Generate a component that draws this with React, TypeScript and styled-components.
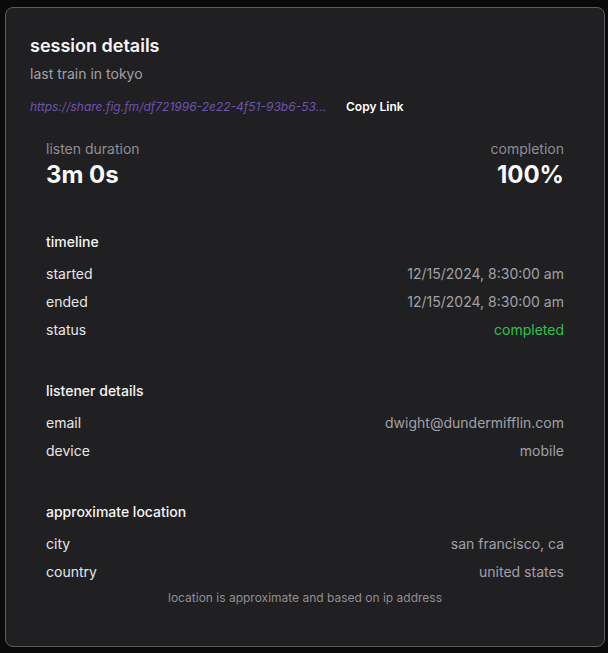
import React from "react";
import styled, { createGlobalStyle } from "styled-components";

const Global = createGlobalStyle`
  html, body { margin: 0; padding: 0; background: #0a0a0a; }
  body { font-family: Inter, "Noto Sans", sans-serif; -webkit-font-smoothing: antialiased; }
`;

const Backdrop = styled.div`
  min-height: 653px;
  display: flex;
  align-items: center;
  padding-left: 5px;
  box-sizing: border-box;
`;

const Modal = styled.div`
  width: 600px;
  box-sizing: border-box;
  background: #202022;
  border: 1px solid #5c5c5f;
  border-radius: 8px;
  padding: 24px;
  color: #f4f4f5;
`;

const Title = styled.h2`
  margin: 0;
  font-size: 18px;
  line-height: 28px;
  font-weight: 600;
  color: #f5f5f5;
`;

const Subtitle = styled.p`
  margin: 4px 0 0;
  font-size: 14px;
  line-height: 20px;
  color: #a1a1a6;
`;

const LinkRow = styled.div`
  margin-top: 8px;
  height: 31px;
  display: flex;
  align-items: center;
  gap: 19px;
`;

const ShareLink = styled.a`
  width: 297px;
  font-size: 12px;
  line-height: 16px;
  font-style: italic;
  color: #6e52b0;
  white-space: nowrap;
  overflow: hidden;
  text-overflow: ellipsis;
  text-decoration: none;
`;

const CopyButton = styled.button`
  background: none;
  border: none;
  padding: 0;
  font-family: inherit;
  font-size: 12px;
  line-height: 16px;
  font-weight: 600;
  color: #ffffff;
  cursor: pointer;
`;

const Sections = styled.div`
  display: flex;
  flex-direction: column;
  gap: 9px;
`;

const Section = styled.section`
  padding: 16px;
`;

const Stats = styled(Section)`
  display: flex;
  justify-content: space-between;
`;

const Stat = styled.div<{ $align?: "left" | "right" }>`
  display: flex;
  flex-direction: column;
  text-align: ${(p) => p.$align ?? "left"};
`;

const StatLabel = styled.span`
  font-size: 14px;
  line-height: 20px;
  color: #8e8e93;
`;

const StatValue = styled.span`
  font-size: 24px;
  line-height: 32px;
  font-weight: 700;
  color: #fafafa;
`;

const SectionTitle = styled.h3`
  margin: 0 0 12px;
  font-size: 14px;
  line-height: 20px;
  font-weight: 500;
  color: #f4f4f5;
`;

const Rows = styled.div`
  display: flex;
  flex-direction: column;
  gap: 8px;
`;

const Row = styled.div`
  display: flex;
  justify-content: space-between;
  font-size: 14px;
  line-height: 20px;
`;

const Label = styled.span`
  color: #e6e6e8;
`;

const Value = styled.span<{ $tone?: "ok" }>`
  color: ${(p) => (p.$tone === "ok" ? "#2ec24f" : "#a1a1a6")};
`;

const Note = styled.p`
  margin: 8px 0 0;
  text-align: center;
  font-size: 12px;
  line-height: 16px;
  color: #8e8e93;
`;

type Item = { label: string; value: string; tone?: "ok" };

const DetailSection = ({ title, items, children }: { title: string; items: Item[]; children?: React.ReactNode }) => (
  <Section>
    <SectionTitle>{title}</SectionTitle>
    <Rows>
      {items.map((it) => (
        <Row key={it.label}>
          <Label>{it.label}</Label>
          <Value $tone={it.tone}>{it.value}</Value>
        </Row>
      ))}
    </Rows>
    {children}
  </Section>
);

export default function App() {
  return (
    <>
      <Global />
      <Backdrop>
        <Modal>
          <Title>session details</Title>
          <Subtitle>last train in tokyo</Subtitle>
          <LinkRow>
            <ShareLink href="#">https://share.fig.fm/df721996-2e22-4f51-93b6-53a7c1e0d9f2</ShareLink>
            <CopyButton>Copy Link</CopyButton>
          </LinkRow>
          <Sections>
            <Stats>
              <Stat>
                <StatLabel>listen duration</StatLabel>
                <StatValue>3m 0s</StatValue>
              </Stat>
              <Stat $align="right">
                <StatLabel>completion</StatLabel>
                <StatValue>100%</StatValue>
              </Stat>
            </Stats>
            <DetailSection
              title="timeline"
              items={[
                { label: "started", value: "12/15/2024, 8:30:00 am" },
                { label: "ended", value: "12/15/2024, 8:30:00 am" },
                { label: "status", value: "completed", tone: "ok" },
              ]}
            />
            <DetailSection
              title="listener details"
              items={[
                { label: "email", value: "dwight@dundermifflin.com" },
                { label: "device", value: "mobile" },
              ]}
            />
            <DetailSection
              title="approximate location"
              items={[
                { label: "city", value: "san francisco, ca" },
                { label: "country", value: "united states" },
              ]}
            >
              <Note>location is approximate and based on ip address</Note>
            </DetailSection>
          </Sections>
        </Modal>
      </Backdrop>
    </>
  );
}
